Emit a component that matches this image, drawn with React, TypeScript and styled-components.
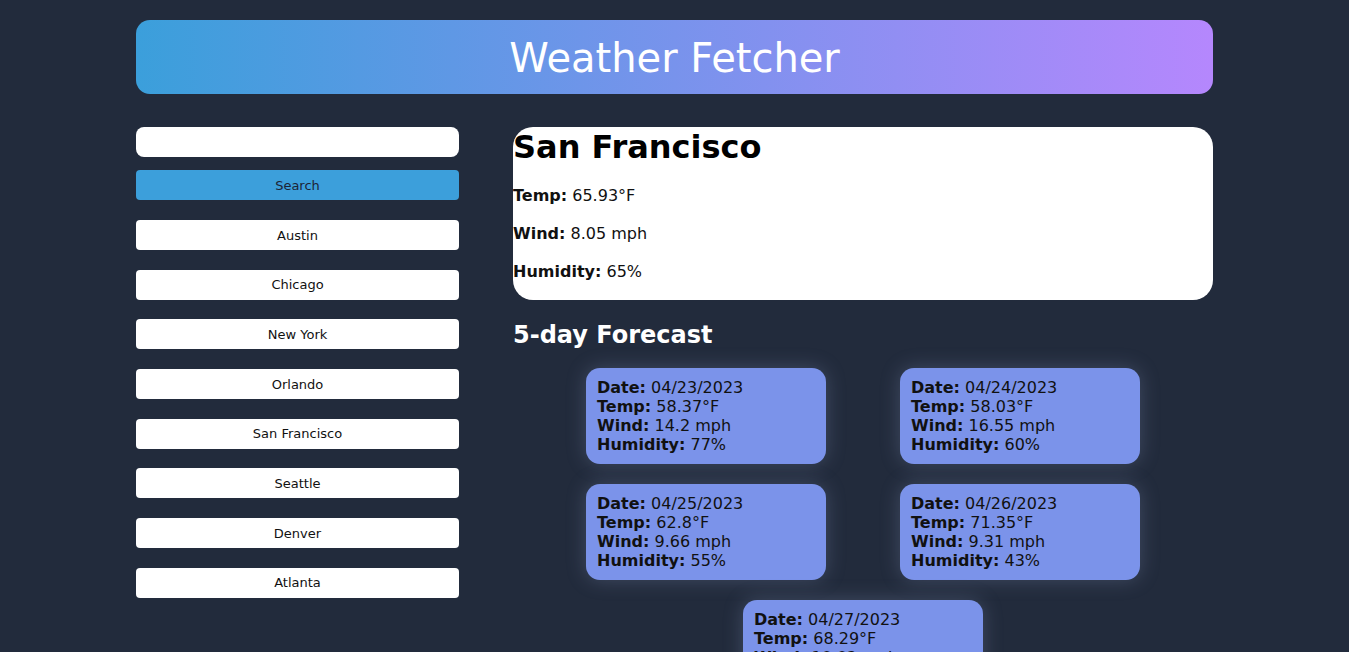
import React from 'react';
import styled, { createGlobalStyle } from 'styled-components';

const GlobalStyle = createGlobalStyle`
  body {
    margin: 0;
    background-color: #222b3c;
    font-family: "DejaVu Sans", Verdana, sans-serif;
  }
`;

const Page = styled.div`
  width: 1077px;
  margin: 0 auto;
  padding-top: 20px;
`;

const Header = styled.header`
  height: 74px;
  border-radius: 14px;
  background: linear-gradient(90deg, #3b9fdb 0%, #b587fd 100%);
  display: flex;
  align-items: center;
  justify-content: center;
`;

const Title = styled.h1`
  margin: 0;
  padding-top: 2px;
  color: #ffffff;
  font-size: 40px;
  font-weight: normal;
`;

const Main = styled.main`
  display: flex;
  gap: 54px;
  margin-top: 33px;
`;

const Sidebar = styled.aside`
  width: 323px;
  flex-shrink: 0;
  display: flex;
  flex-direction: column;
`;

const SearchInput = styled.input`
  height: 30px;
  box-sizing: border-box;
  border: none;
  border-radius: 8px;
  background: #ffffff;
  margin-bottom: 13px;
  outline: none;
`;

const Button = styled.button<{ $primary?: boolean }>`
  height: 30px;
  border: none;
  border-radius: 4px;
  background: ${(p) => (p.$primary ? '#3c9fdb' : '#ffffff')};
  color: ${(p) => (p.$primary ? '#1c2435' : '#111111')};
  font-family: inherit;
  font-size: 13px;
  margin-bottom: ${(p) => (p.$primary ? '20px' : '19.7px')};
  cursor: pointer;
`;

const Content = styled.section`
  width: 700px;
`;

const CurrentCard = styled.div`
  background: #ffffff;
  border-radius: 20px;
  height: 173px;
  box-sizing: border-box;
  overflow: hidden;
`;

const CityName = styled.h2`
  margin: 0;
  font-size: 32px;
  line-height: 41px;
  color: #000;
`;

const Line = styled.p<{ $first?: boolean }>`
  margin: 0;
  margin-top: ${(p) => (p.$first ? '17px' : '16px')};
  font-size: 16px;
  line-height: 22px;
  color: #111;
`;

const ForecastTitle = styled.h3`
  color: #ffffff;
  font-size: 24px;
  margin: 21px 0 19px;
  line-height: 28px;
`;

const ForecastGrid = styled.div`
  display: flex;
  flex-wrap: wrap;
  justify-content: center;
`;

const DayCard = styled.div`
  width: 240px;
  box-sizing: border-box;
  margin: 0 37px 20px;
  padding: 10px 11px;
  background: #7b93ea;
  border-radius: 14px;
  box-shadow: 0 0 20px rgba(160, 175, 220, 0.25);
  color: #111;
  font-size: 16px;
  line-height: 19px;
`;

const DayLine = styled.div``;

const cities = ['Austin', 'Chicago', 'New York', 'Orlando', 'San Francisco', 'Seattle', 'Denver', 'Atlanta'];

const forecast = [
  { date: '04/23/2023', temp: '58.37', wind: '14.2', humidity: '77' },
  { date: '04/24/2023', temp: '58.03', wind: '16.55', humidity: '60' },
  { date: '04/25/2023', temp: '62.8', wind: '9.66', humidity: '55' },
  { date: '04/26/2023', temp: '71.35', wind: '9.31', humidity: '43' },
  { date: '04/27/2023', temp: '68.29', wind: '10.02', humidity: '52' },
];

export default function App() {
  return (
    <>
      <GlobalStyle />
      <Page>
        <Header>
          <Title>Weather Fetcher</Title>
        </Header>
        <Main>
          <Sidebar>
            <SearchInput type="text" />
            <Button $primary>Search</Button>
            {cities.map((c) => (
              <Button key={c}>{c}</Button>
            ))}
          </Sidebar>
          <Content>
            <CurrentCard>
              <CityName>San Francisco</CityName>
              <Line $first>
                <b>Temp:</b> 65.93°F
              </Line>
              <Line>
                <b>Wind:</b> 8.05 mph
              </Line>
              <Line>
                <b>Humidity:</b> 65%
              </Line>
            </CurrentCard>
            <ForecastTitle>5-day Forecast</ForecastTitle>
            <ForecastGrid>
              {forecast.map((d) => (
                <DayCard key={d.date}>
                  <DayLine>
                    <b>Date:</b> {d.date}
                  </DayLine>
                  <DayLine>
                    <b>Temp:</b> {d.temp}°F
                  </DayLine>
                  <DayLine>
                    <b>Wind:</b> {d.wind} mph
                  </DayLine>
                  <DayLine>
                    <b>Humidity:</b> {d.humidity}%
                  </DayLine>
                </DayCard>
              ))}
            </ForecastGrid>
          </Content>
        </Main>
      </Page>
    </>
  );
}
